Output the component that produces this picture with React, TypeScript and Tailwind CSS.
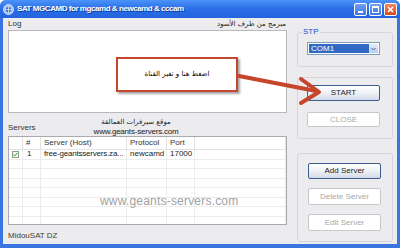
import React from 'react';

const font = "font-['Liberation_Sans',Arial,sans-serif]";
const arabic = "font-['DejaVu_Sans',sans-serif]";

const XpButton: React.FC<{ label: string; disabled?: boolean; className?: string }> = ({ label, disabled, className }) => (
  <div
    className={
      'flex w-[73px] items-center justify-center rounded-[2px] border text-[8px] ' +
      (disabled
        ? 'border-[#c8c8cc] bg-white text-[#a9a9ad]'
        : 'border-[#3d5c8f] bg-gradient-to-b from-white via-[#eef1f6] to-[#d3dae6] text-[#222]') +
      ' ' +
      (className ?? '')
    }
  >
    {label}
  </div>
);

const GroupBox: React.FC<{ label?: string; className?: string; children: React.ReactNode }> = ({ label, className, children }) => (
  <div className={'relative rounded-[3px] border border-[#d6d5da] ' + (className ?? '')}>
    {label && (
      <span className="absolute -top-[6px] left-[4px] bg-[#ecebee] px-[1px] text-[8px] leading-[10px] text-[#2050c8]">
        {label}
      </span>
    )}
    {children}
  </div>
);

const cols = ['w-[14px]', 'w-[18px]', 'w-[86px]', 'w-[40px]', 'w-[28px]', 'flex-1'];

const App: React.FC = () => {
  const emptyRows = Array.from({ length: 7 });

  return (
    <div className={`${font} relative flex h-[248px] w-[400px] flex-col overflow-hidden rounded-t-[6px] bg-[#3a74e0]`}>
      {/* title bar */}
      <div className="flex h-[18px] items-center bg-gradient-to-b from-[#4c93f8] via-[#2a6ee6] to-[#2463de] px-[3px]">
        <svg width="11" height="11" viewBox="0 0 11 11" className="mr-[3px]">
          <circle cx="5.5" cy="5.5" r="5" fill="#9fc2f0" stroke="#e8f1ff" strokeWidth="0.8" />
          <circle cx="5.5" cy="5.5" r="2.6" fill="#3d6fc8" />
          <path d="M2 5.5h7M5.5 2v7" stroke="#e8f1ff" strokeWidth="0.7" />
        </svg>
        <span className="text-[8px] font-bold tracking-[-0.45px] text-white [text-shadow:1px_1px_0_#0b3a9c]">
          SAT MGCAMD for mgcamd &amp; newcamd &amp; cccam
        </span>
        <div className="ml-auto flex gap-[2px]">
          <div className="flex h-[13px] w-[13px] items-end justify-center rounded-[2px] border border-white bg-gradient-to-b from-[#6fa0f5] to-[#3f76e3] pb-[2px]">
            <div className="h-[2px] w-[5px] bg-white" />
          </div>
          <div className="flex h-[13px] w-[13px] items-center justify-center rounded-[2px] border border-white bg-gradient-to-b from-[#6fa0f5] to-[#3f76e3]">
            <div className="h-[7px] w-[7px] border border-t-2 border-white" />
          </div>
          <div className="flex h-[13px] w-[13px] items-center justify-center rounded-[2px] border border-white bg-gradient-to-b from-[#f08a5e] to-[#d94420]">
            <svg width="7" height="7" viewBox="0 0 7 7">
              <path d="M1 1l5 5M6 1l-5 5" stroke="white" strokeWidth="1.6" />
            </svg>
          </div>
        </div>
      </div>

      {/* body */}
      <div className="mx-[3px] mb-[4px] flex flex-1 bg-[#ecebee]">
        {/* left column */}
        <div className="flex w-[284px] flex-col pl-[5px]">
          <div className="flex h-[12px] items-center justify-between text-[8px] text-[#333]">
            <span>Log</span>
            <span className={`${arabic} pr-[1px] text-[7px] text-[#222]`} dir="rtl">
              مبرمج من طرف الأسود
            </span>
          </div>
          <div className="h-[83px] border border-[#b9b9bd] bg-white" />

          <div className="flex h-[23px] items-end text-[8px] text-[#333]">
            <span className="pb-[2px]">Servers</span>
            <div className="ml-[58px] flex flex-col items-center leading-[9px] text-[#222]">
              <span className={`${arabic} text-[7px]`} dir="rtl">
                موقع سيرفرات العمالقة
              </span>
              <span className="tracking-[-0.2px]">www.geants-servers.com</span>
            </div>
          </div>

          {/* server list */}
          <div className="relative h-[89px] overflow-hidden border border-[#a9a9ae] bg-white text-[8px] text-[#222]">
            <div className="flex h-[13px] border-b border-[#e2e2e2] text-[#333]">
              {['', '#', 'Server (Host)', 'Protocol', 'Port', ''].map((h, i) => (
                <div key={i} className={`${cols[i]} flex items-center whitespace-nowrap border-r border-[#e2e2e2] pl-[3px]`}>
                  {h}
                </div>
              ))}
            </div>
            <div className="flex h-[9.5px] border-b border-[#ececec]">
              <div className={`${cols[0]} flex items-center justify-center border-r border-[#ececec]`}>
                <div className="flex h-[7px] w-[7px] items-center justify-center border border-[#8aa08a] bg-[#f4f8f4]">
                  <svg width="5" height="5" viewBox="0 0 5 5">
                    <path d="M0.5 2.5l1.3 1.4L4.5 0.8" fill="none" stroke="#2a9a2a" strokeWidth="1" />
                  </svg>
                </div>
              </div>
              <div className={`${cols[1]} flex items-center border-r border-[#ececec] pl-[4px]`}>1</div>
              <div className={`${cols[2]} flex items-center overflow-hidden whitespace-nowrap border-r border-[#ececec] pl-[3px] tracking-[-0.2px]`}>
                free-geantsservers.za...
              </div>
              <div className={`${cols[3]} flex items-center whitespace-nowrap border-r border-[#ececec] pl-[3px]`}>newcamd</div>
              <div className={`${cols[4]} flex items-center border-r border-[#ececec] pl-[3px]`}>17000</div>
              <div className={`${cols[5]} border-r border-[#ececec]`} />
            </div>
            {emptyRows.map((_, r) => (
              <div key={r} className="flex h-[9.5px] border-b border-[#ececec]">
                {cols.map((c, i) => (
                  <div key={i} className={`${c} border-r border-[#ececec]`} />
                ))}
              </div>
            ))}
            <span className="absolute left-[91px] top-[55px] text-[12px] tracking-[0.2px] text-[#a2a2a2]">
              www.geants-servers.com
            </span>
          </div>

          <div className="flex flex-1 items-center pt-[3px] text-[8px] text-[#4b3f16]">MidouSAT DZ</div>
        </div>

        {/* right column */}
        <div className="ml-[10px] flex w-[96px] flex-col pt-[14px]">
          <GroupBox label="STP" className="h-[35px] pl-[9px] pt-[9px]">
            <div className="flex h-[13px] w-[73px] border border-[#7f9db9] bg-white p-[1px]">
              <div className="flex flex-1 items-center bg-[#316ac5] pl-[2px] text-[8px] text-white">COM1</div>
              <div className="flex w-[9px] items-center justify-center bg-gradient-to-b from-[#e3ecfd] to-[#b7cdf5]">
                <svg width="5" height="4" viewBox="0 0 5 4">
                  <path d="M0.5 1l2 2 2-2" fill="none" stroke="#4d6185" strokeWidth="1" />
                </svg>
              </div>
            </div>
          </GroupBox>

          <GroupBox className="mt-[10px] flex h-[62px] flex-col pl-[9px] pt-[7px]">
            <XpButton label="START" className="h-[16px]" />
            <XpButton label="CLOSE" disabled className="mt-[11px] h-[15px]" />
          </GroupBox>

          <GroupBox className="mt-[14px] flex h-[89px] flex-col pl-[10px] pt-[9px]">
            <XpButton label="Add Server" className="h-[16px]" />
            <XpButton label="Delete Server" disabled className="mt-[9px] h-[17px]" />
            <XpButton label="Edit Server" disabled className="mt-[9px] h-[17px]" />
          </GroupBox>
        </div>
      </div>

      {/* callout overlay */}
      <div className="absolute left-[116px] top-[57px] flex h-[35px] w-[122px] items-center justify-center border-2 border-[#c4462c] bg-white shadow-[2px_2px_2px_rgba(0,0,0,0.35)]">
        <span className={`${arabic} text-[7px] text-black`} dir="rtl">
          اضغط هنا و تغير القناة
        </span>
      </div>
      <svg className="absolute left-0 top-0" width="400" height="248" viewBox="0 0 400 248">
        <g stroke="#c7452b" strokeWidth="4" strokeLinecap="round" fill="none">
          <path d="M239 76L316 91" />
          <path d="M301 79L319 92L301 103" strokeLinejoin="round" />
        </g>
      </svg>
    </div>
  );
};

export default App;
